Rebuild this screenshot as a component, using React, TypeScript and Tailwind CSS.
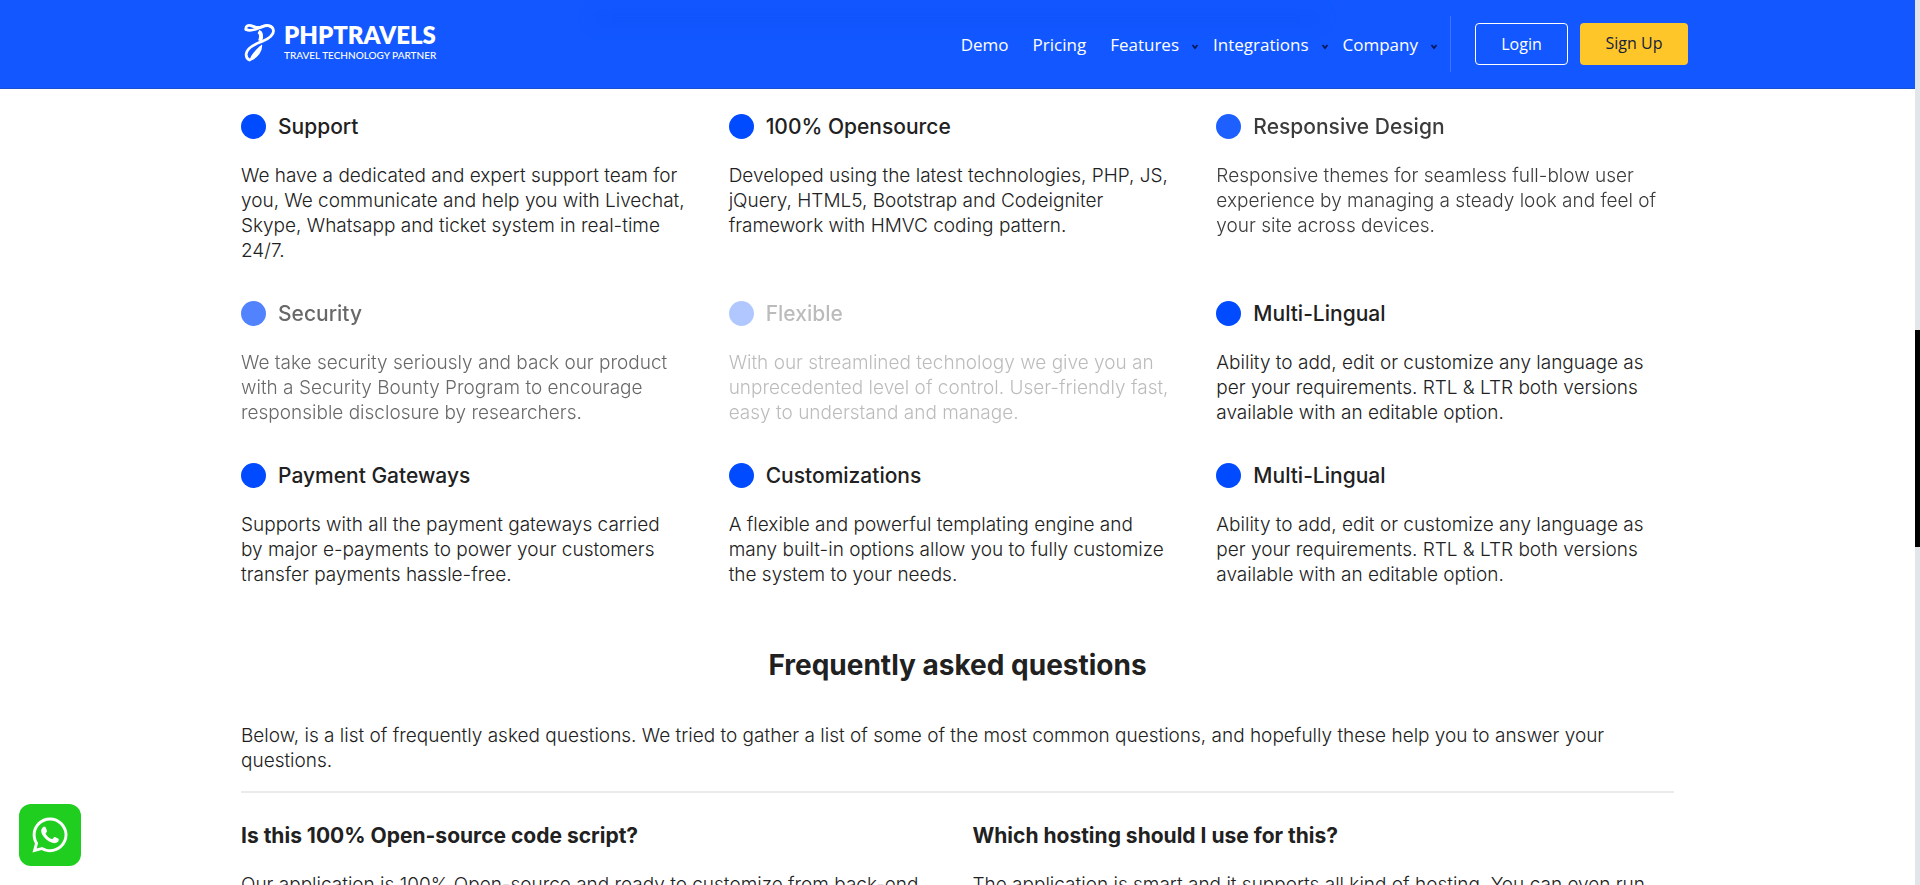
import { FaWhatsapp } from "react-icons/fa";

type Feature = { title: string; lines: string[]; tone: string };

const multiLingual = [
  "Ability to add, edit or customize any language as",
  "per your requirements. RTL & LTR both versions",
  "available with an editable option.",
];

const features: Feature[] = [
  {
    title: "Support",
    lines: [
      "We have a dedicated and expert support team for",
      "you, We communicate and help you with Livechat,",
      "Skype, Whatsapp and ticket system in real-time",
      "24/7.",
    ],
    tone: "opacity-100",
  },
  {
    title: "100% Opensource",
    lines: [
      "Developed using the latest technologies, PHP, JS,",
      "jQuery, HTML5, Bootstrap and Codeigniter",
      "framework with HMVC coding pattern.",
    ],
    tone: "opacity-100",
  },
  {
    title: "Responsive Design",
    lines: [
      "Responsive themes for seamless full-blow user",
      "experience by managing a steady look and feel of",
      "your site across devices.",
    ],
    tone: "opacity-88",
  },
  {
    title: "Security",
    lines: [
      "We take security seriously and back our product",
      "with a Security Bounty Program to encourage",
      "responsible disclosure by researchers.",
    ],
    tone: "opacity-68",
  },
  {
    title: "Flexible",
    lines: [
      "With our streamlined technology we give you an",
      "unprecedented level of control. User-friendly fast,",
      "easy to understand and manage.",
    ],
    tone: "opacity-30",
  },
  { title: "Multi-Lingual", lines: multiLingual, tone: "opacity-100" },
  {
    title: "Payment Gateways",
    lines: [
      "Supports with all the payment gateways carried",
      "by major e-payments to power your customers",
      "transfer payments hassle-free.",
    ],
    tone: "opacity-100",
  },
  {
    title: "Customizations",
    lines: [
      "A flexible and powerful templating engine and",
      "many built-in options allow you to fully customize",
      "the system to your needs.",
    ],
    tone: "opacity-100",
  },
  { title: "Multi-Lingual", lines: multiLingual, tone: "opacity-100" },
];

const questions = [
  {
    title: "Is this 100% Open-source code script?",
    text: "Our application is 100% Open-source and ready to customize from back-end",
  },
  {
    title: "Which hosting should I use for this?",
    text: "The application is smart and it supports all kind of hosting. You can even run",
  },
];

function LogoMark() {
  return (
    <svg viewBox="0 0 32 40" className="h-10 w-8" fill="none" stroke="#fff" strokeLinecap="round" strokeLinejoin="round" aria-hidden="true">
      <path d="M2 6C1.500 3 4 1.800 7 2.600C11 4 14 5.500 18 4C23 1.500 29 2 29.500 8C29.500 13 24 16 18 18.500C11 21 3 25 2.200 31C2 34 3 36 5.500 37" strokeWidth="2.800" />
      <path d="M2 6.500C7 9 13 6 17 4C21 2 25 1.600 28 4.500" strokeWidth="2.800" />
      <path d="M14.500 8.500C17.500 10 17.500 14 16 18" strokeWidth="4" strokeLinecap="butt" />
      <path d="M17.500 22.500C17.500 28 14 34 6.500 37C7 32 12 28 16.500 23.500" fill="#fff" strokeWidth="1.400" />
    </svg>
  );
}

function Chevron() {
  return (
    <svg viewBox="0 0 8 6" className="mt-1 h-1.5 w-2" fill="none" stroke="#06175c" strokeWidth="1.800" aria-hidden="true">
      <path d="M1.500 1L4 4L6.500 1" />
    </svg>
  );
}

function NavItem({ label, menu }: { label: string; menu?: boolean }) {
  return (
    <a href="#" className="flex items-center gap-3 whitespace-nowrap">
      {label}
      {menu && <Chevron />}
    </a>
  );
}

function Header() {
  return (
    <header className="relative z-10 shrink-0 border-b border-[#1a4fd0] bg-[#1257ff] text-white">
      <div className="absolute top-3 left-[31%] h-3 w-[38%] bg-[#0c4ef5] opacity-40 blur-sm" />
      <div className="relative mx-auto flex h-22 max-w-[1461px] items-center justify-between pl-[15px]">
        <a href="#" className="flex items-start gap-2 pb-0.5 pl-0.5">
          <LogoMark />
          <span className="flex flex-col font-['Lato',sans-serif] whitespace-nowrap">
            <span className="text-2xl leading-6 font-extrabold">PHPTRAVELS</span>
            <span className="text-[10px] leading-4 font-medium">TRAVEL TECHNOLOGY PARTNER</span>
          </span>
        </a>
        <div className="flex items-center font-['Open_Sans',sans-serif]">
          <nav className="flex items-center pt-0.5 text-[17px]">
            <div className="flex gap-6 pr-3.5">
              <NavItem label="Demo" />
              <NavItem label="Pricing" />
              <NavItem label="Features" menu />
            </div>
            <div className="flex gap-3.5">
              <NavItem label="Integrations" menu />
              <NavItem label="Company" menu />
            </div>
          </nav>
          <div className="ml-3 h-14 w-px bg-[#3d75ff]" />
          <a href="#" className="ml-6 flex h-[42px] w-[93px] items-center justify-center rounded border border-white text-base">
            Login
          </a>
          <a href="#" className="ml-3 flex h-[42px] w-[108px] items-center justify-center rounded bg-[#ffc629] pb-0.5 text-base text-[#14213d]">
            Sign Up
          </a>
        </div>
      </div>
    </header>
  );
}

export default function App() {
  return (
    <div className="flex h-screen overflow-hidden bg-white font-['Inter',sans-serif] text-[#212121]">
      <div className="flex min-w-0 flex-1 flex-col overflow-hidden">
        <Header />
        <main className="mx-auto w-full max-w-[1433px] pt-[25px]">
          <section className="grid grid-cols-3 gap-x-[30px] gap-y-[38px]">
            {features.map((f, i) => (
              <article key={i} className={f.tone}>
                <h3 className="flex h-[25px] items-center gap-3 text-[21px] font-medium">
                  <span className="size-[25px] rounded-full bg-[#004aff]" />
                  {f.title}
                </h3>
                <p className="mt-6 text-[19px] leading-[25px] font-light whitespace-pre-line">{f.lines.join("\n")}</p>
              </article>
            ))}
          </section>
          <section>
            <h2 className="pt-[60px] text-center text-[28px] leading-9 font-bold">Frequently asked questions</h2>
            <p className="mt-10 text-[19px] leading-[25px] font-light">
              Below, is a list of frequently asked questions. We tried to gather a list of some of the most common questions, and hopefully these help you to answer your
              <br />
              questions.
            </p>
            <hr className="mt-[18px] border-t-2 border-[#ebebeb]" />
            <div className="mt-[30px] grid grid-cols-2 gap-[30px]">
              {questions.map((q) => (
                <article key={q.title}>
                  <h3 className="text-[21px] leading-[25px] font-bold">{q.title}</h3>
                  <p className="mt-6 text-[19px] leading-[25px] font-light whitespace-nowrap">{q.text}</p>
                </article>
              ))}
            </div>
          </section>
        </main>
      </div>
      <div className="w-[5px] shrink-0 bg-[#e2e6e9] pt-[330px]">
        <div className="h-[217px] bg-black" />
      </div>
      <a href="#" aria-label="WhatsApp" className="fixed bottom-[19px] left-[19px] flex size-[62px] items-center justify-center rounded-xl bg-[#1fce1f] text-white">
        <FaWhatsapp className="size-10" />
      </a>
    </div>
  );
}
